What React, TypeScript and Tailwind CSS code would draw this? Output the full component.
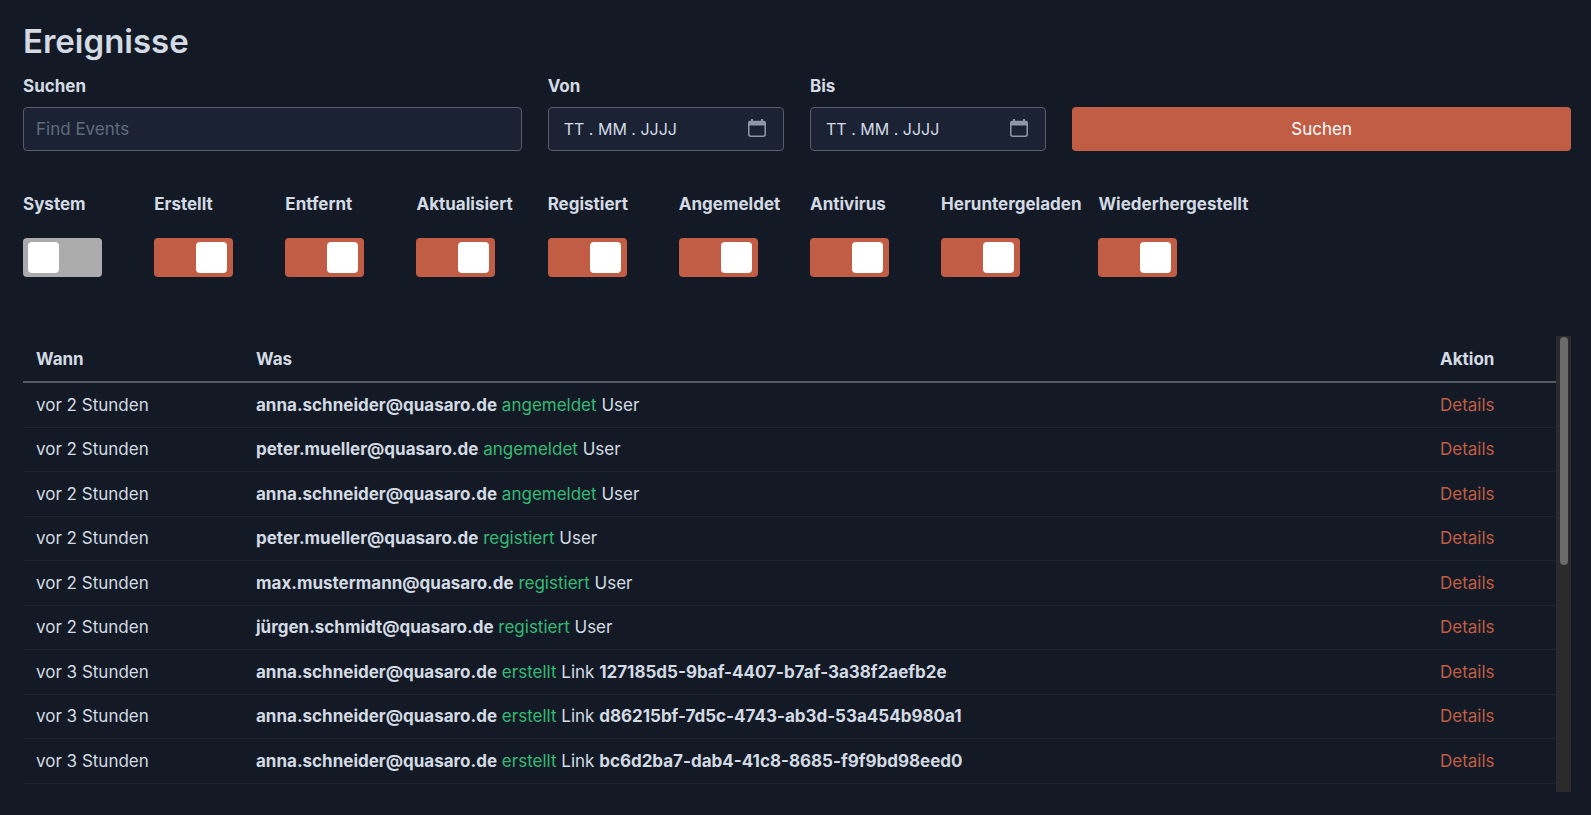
import { useState } from "react";

type Filter = { id: string; label: string; on: boolean };

type EventRow = {
  when: string;
  user: string;
  action: string;
  target: string;
  ref?: string;
};

const initialFilters: Filter[] = [
  { id: "system", label: "System", on: false },
  { id: "created", label: "Erstellt", on: true },
  { id: "deleted", label: "Entfernt", on: true },
  { id: "updated", label: "Aktualisiert", on: true },
  { id: "registered", label: "Registiert", on: true },
  { id: "loggedin", label: "Angemeldet", on: true },
  { id: "antivirus", label: "Antivirus", on: true },
  { id: "downloaded", label: "Heruntergeladen", on: true },
  { id: "restored", label: "Wiederhergestellt", on: true },
];

const events: EventRow[] = [
  { when: "vor 2 Stunden", user: "anna.schneider@quasaro.de", action: "angemeldet", target: "User" },
  { when: "vor 2 Stunden", user: "peter.mueller@quasaro.de", action: "angemeldet", target: "User" },
  { when: "vor 2 Stunden", user: "anna.schneider@quasaro.de", action: "angemeldet", target: "User" },
  { when: "vor 2 Stunden", user: "peter.mueller@quasaro.de", action: "registiert", target: "User" },
  { when: "vor 2 Stunden", user: "max.mustermann@quasaro.de", action: "registiert", target: "User" },
  { when: "vor 2 Stunden", user: "jürgen.schmidt@quasaro.de", action: "registiert", target: "User" },
  {
    when: "vor 3 Stunden",
    user: "anna.schneider@quasaro.de",
    action: "erstellt",
    target: "Link",
    ref: "127185d5-9baf-4407-b7af-3a38f2aefb2e",
  },
  {
    when: "vor 3 Stunden",
    user: "anna.schneider@quasaro.de",
    action: "erstellt",
    target: "Link",
    ref: "d86215bf-7d5c-4743-ab3d-53a454b980a1",
  },
  {
    when: "vor 3 Stunden",
    user: "anna.schneider@quasaro.de",
    action: "erstellt",
    target: "Link",
    ref: "bc6d2ba7-dab4-41c8-8685-f9f9bd98eed0",
  },
];

const CalendarIcon = () => (
  <svg width="18" height="18" viewBox="0 0 18 18" fill="none" aria-hidden="true">
    <path d="M3 0h2v3H3zM13 0h2v3h-2z" fill="#8f98a5" />
    <path d="M2 1.8h14a2 2 0 0 1 2 2v2.8H0V3.8a2 2 0 0 1 2-2z" fill="#8f98a5" />
    <rect x="0.75" y="3.5" width="16.5" height="13.75" rx="2" stroke="#8f98a5" strokeWidth="1.5" />
  </svg>
);

const DateField = ({ id, label }: { id: string; label: string }) => (
  <div className="col-span-2 flex flex-col gap-[9px]">
    <label htmlFor={id} className="font-bold">
      {label}
    </label>
    <div className="flex h-11 items-center rounded border border-[#555c6a] bg-[#1a2234] pr-[17px] pl-[15px]">
      <input
        id={id}
        type="text"
        placeholder="TT . MM . JJJJ"
        className="w-full min-w-0 bg-transparent text-base outline-none placeholder:text-[#d3dae4]"
      />
      <button type="button" aria-label={`${label} Kalender`} className="shrink-0 pb-[2px]">
        <CalendarIcon />
      </button>
    </div>
  </div>
);

const Toggle = ({ filter, onToggle }: { filter: Filter; onToggle: () => void }) => (
  <div className="flex min-w-fit basis-1/12 flex-col gap-[22px] pr-[17px]">
    <label htmlFor={filter.id} className="font-bold">
      {filter.label}
    </label>
    <input
      id={filter.id}
      type="checkbox"
      checked={filter.on}
      onChange={onToggle}
      className="flex h-[39px] w-[79px] cursor-pointer appearance-none items-center rounded bg-[#ababab] px-[5px] before:size-[31px] before:rounded before:bg-white before:content-[''] checked:justify-end checked:bg-[#c05d44] checked:pr-[6px]"
    />
  </div>
);

const EventTable = () => (
  <div className="flex min-h-0 flex-1">
    <div className="min-w-0 flex-1 overflow-hidden">
      <table className="w-full table-fixed border-collapse text-left">
        <thead>
          <tr className="h-[46px] border-b-2 border-[#555963]">
            <th className="w-[220px] px-[13px] font-bold">Wann</th>
            <th className="px-[13px] font-bold">Was</th>
            <th className="w-[129px] px-[13px] font-bold">Aktion</th>
          </tr>
        </thead>
        <tbody>
          {events.map((e, i) => (
            <tr key={i} className="border-b border-[#1d2430] odd:h-[45px] even:h-[44px]">
              <td className="px-[13px]">{e.when}</td>
              <td className="px-[13px]">
                <strong className="font-bold">{e.user}</strong>{" "}
                <span className="text-[#35ba75]">{e.action}</span> {e.target}{" "}
                {e.ref && <strong className="font-bold">{e.ref}</strong>}
              </td>
              <td className="px-[13px]">
                <a href="#details" className="text-[#c05d44]">
                  Details
                </a>
              </td>
            </tr>
          ))}
        </tbody>
      </table>
    </div>

    {/* Scrollbar */}
    <div className="w-[15px] shrink-0 bg-[#2b2b2b] pt-px pl-1">
      <div className="h-1/2 w-2 rounded-full bg-[#6b6b6b]" />
    </div>
  </div>
);

const App = () => {
  const [filters, setFilters] = useState(initialFilters);

  const toggle = (id: string) =>
    setFilters((prev) => prev.map((f) => (f.id === id ? { ...f, on: !f.on } : f)));

  return (
    <main className="flex h-screen flex-col bg-[#131a25] pt-5 pr-5 pb-[23px] pl-[23px] font-['Inter',sans-serif] text-[17px] leading-6 text-[#d3dae4]">
      <h1 className="text-[33px] leading-[42px] font-semibold">Ereignisse</h1>

      <form className="mt-3 grid grid-cols-12 gap-x-[26px]" onSubmit={(e) => e.preventDefault()}>
        <div className="col-span-4 flex flex-col gap-[9px]">
          <label htmlFor="search" className="font-bold">
            Suchen
          </label>
          <input
            id="search"
            type="text"
            placeholder="Find Events"
            className="h-11 rounded border border-[#555c6a] bg-[#1a2234] px-3 outline-none placeholder:text-[#5f6c7c]"
          />
        </div>
        <DateField id="from" label="Von" />
        <DateField id="to" label="Bis" />
        <button type="submit" className="col-span-4 h-11 self-end rounded bg-[#c05d44] text-white">
          Suchen
        </button>
      </form>

      <div className="mt-[41px] -mr-[26px] flex">
        {filters.map((f) => (
          <Toggle key={f.id} filter={f} onToggle={() => toggle(f.id)} />
        ))}
      </div>

      <div className="mt-[59px] flex min-h-0 flex-1 flex-col">
        <EventTable />
      </div>
    </main>
  );
};

export default App;
